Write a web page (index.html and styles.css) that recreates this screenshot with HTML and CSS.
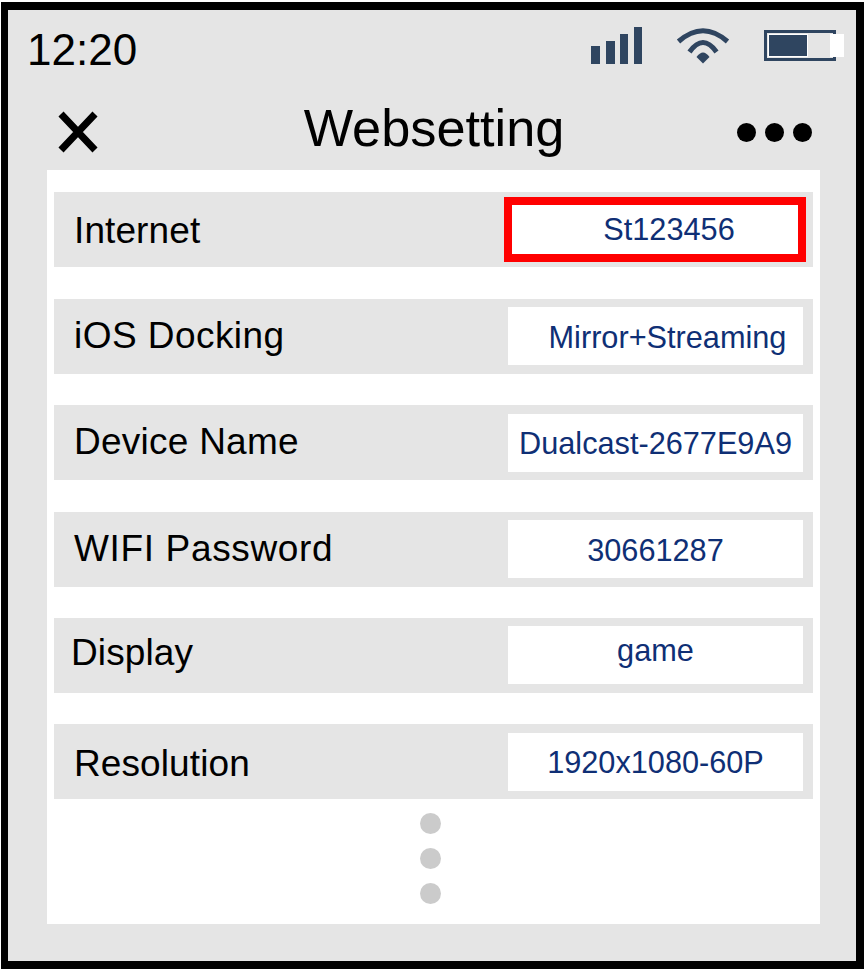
FILE: index.html
```html
<!DOCTYPE html>
<html lang="en">
<head>
<meta charset="utf-8">
<title>Websetting</title>
<link rel="stylesheet" href="styles.css">
</head>
<body>
<div class="phone">
  <div class="status">
    <span class="time">12:20</span>
    <div class="status-icons">
      <svg class="ic-signal" width="51" height="37" viewBox="0 0 51 37"><path d="M0 19h9v18H0zM15 14h9v23h-9zM29 7h8v30h-8zM43 0h8v37h-8z"/></svg>
      <svg class="ic-wifi" width="54" height="36" viewBox="0 0 54 36"><path d="M2.500 13.500Q27-8 51.500 13.500M13.500 24Q27 5 40.500 24" fill="none" stroke="#2f4560" stroke-width="5"/><path d="M27 35.500L20.500 29Q27 20 33.500 29z"/></svg>
      <div class="battery"><div class="battery-fill"></div><div class="battery-cap"></div></div>
    </div>
  </div>
  <div class="titlebar">
    <svg class="close" width="40" height="42" viewBox="0 0 40 42"><path d="M3 3l34 36M37 3L3 39" fill="none" stroke="#000" stroke-width="7"/></svg>
    <h1 class="title">Websetting</h1>
    <div class="more"><i></i><i></i><i></i></div>
  </div>
  <div class="panel">
    <div class="rows">
      <div class="row"><span class="label label-low1">Internet</span><span class="value value-active">St123456</span></div>
      <div class="row"><span class="label label-wide">iOS Docking</span><span class="value value-mirror value-low">Mirror+Streaming</span></div>
      <div class="row"><span class="label label-mid label-up1">Device Name</span><span class="value">Dualcast-2677E9A9</span></div>
      <div class="row"><span class="label label-wider">WIFI Password</span><span class="value value-low">30661287</span></div>
      <div class="row"><span class="label label-tight label-up2">Display</span><span class="value value-up">game</span></div>
      <div class="row"><span class="label label-low2">Resolution</span><span class="value">1920x1080-60P</span></div>
    </div>
    <div class="dots"><i></i><i></i><i></i></div>
  </div>
</div>
</body>
</html>
```
FILE: styles.css
```css
* { box-sizing: border-box; }
html, body { margin: 0; height: 100%; background: #fff; }
body { padding: 2px 1px 1px 1px; font-family: "Liberation Sans", Arial, sans-serif; }
.phone {
  width: 863px; height: 967px;
  border: 8px solid #000;
  border-left-width: 7px;
  background: #e5e5e5;
  display: flex; flex-direction: column;
  padding: 0 36px 37px 39px;
  color: #000;
}
.status { height: 67px; display: flex; justify-content: space-between; align-items: flex-start; margin: 0 0 0 -20px; }
.time { font-size: 44px; line-height: 50px; margin-top: 15px; }
.status-icons { display: flex; align-items: flex-start; fill: #2f4560; }
.ic-signal { margin-top: 17px; }
.ic-wifi { margin: 18px 0 0 34px; }
.battery { position: relative; width: 72px; height: 31px; margin: 20px -16px 0 34px; border: 3px solid #2f4560; padding: 2px; background: #e5e5e5; }
.battery-fill { width: 38px; height: 21px; background: #2f4560; outline: 1px solid #fff; }
.battery-cap { position: absolute; right: -11px; top: 1px; width: 14px; height: 23px; background: #fff; }
.titlebar { height: 93px; display: flex; align-items: flex-start; justify-content: space-between; padding: 0 8px 0 11px; }
.close { margin-top: 34px; }
.title { font-size: 52.3px; font-weight: 400; line-height: 60px; margin: 21px 0 0 33px; }
.more { display: flex; gap: 9px; margin-top: 46px; }
.more i { width: 19px; height: 19px; border-radius: 50%; background: #000; }
.panel { flex: 1; background: #fff; padding: 22.2px 7px 0; }
.rows { display: flex; flex-direction: column; gap: 31.45px; }
.row { height: 75px; background: #e5e5e5; display: flex; align-items: center; justify-content: space-between; padding: 0 10px 0 20px; }
.label { font-size: 37px; line-height: 44px; letter-spacing: .1px; }
.label-wide { letter-spacing: .45px; }
.label-wider { letter-spacing: .65px; }
.label-mid { letter-spacing: .25px; }
.label-tight { margin-left: -3px; }
.label-low1 { margin-top: 2px; }
.label-low2 { margin-top: 4px; }
.label-up1 { margin-bottom: 2px; }
.label-up2 { margin-bottom: 4px; }
.value {
  width: 295px; height: 58px;
  background: #fff; color: #0f2f75;
  font-size: 30.7px; line-height: 60px; text-align: center;
  white-space: nowrap;
}
.value-active { width: 302px; height: 65px; margin-right: -3px; border: 8px solid #f00; line-height: 49px; padding-left: 28px; }
.value-mirror { padding-left: 24px; }
.value-low { line-height: 62px; }
.value-up { line-height: 50px; }
.dots { display: flex; flex-direction: column; align-items: center; gap: 14px; margin: 14px 6px 0 0; }
.dots i { width: 21px; height: 21px; border-radius: 50%; background: #cbcbcb; }
```
